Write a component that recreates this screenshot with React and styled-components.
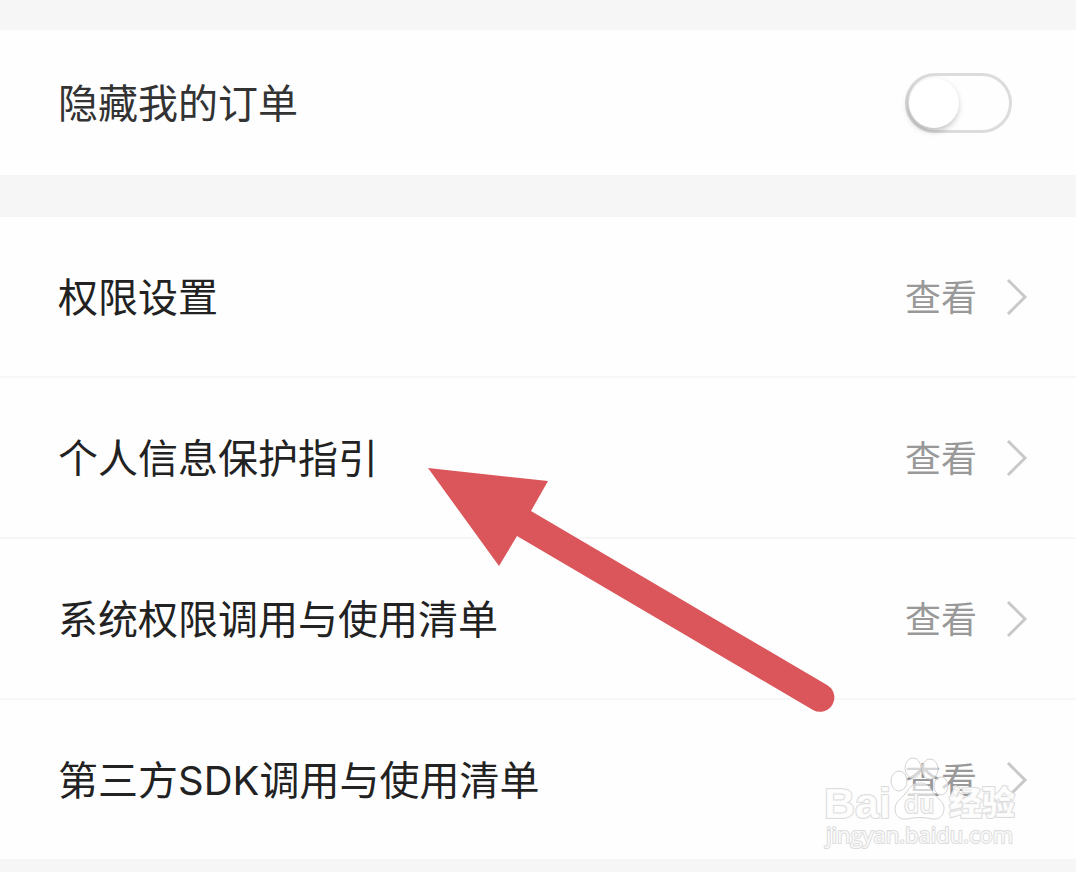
import styled, { createGlobalStyle } from 'styled-components';

const GlobalStyle = createGlobalStyle`
  * {
    box-sizing: border-box;
  }

  body {
    margin: 0;
    background: #f6f6f6;
    font-family: Inter, 'Noto Sans CJK SC', sans-serif;
  }
`;

const Page = styled.main`
  position: relative;
  display: flex;
  flex-direction: column;
  gap: 42px;
  padding: 30px 0 14px;
  overflow: hidden;
`;

const Group = styled.section`
  background: #fefefe;
`;

const List = styled.ul`
  margin: 0;
  padding: 0;
  list-style: none;
  background: #fefefe;
`;

const Item = styled.li`
  border-bottom: 2px solid #f6f6f6;

  &:last-child {
    border-bottom: 0;
  }
`;

const SwitchRow = styled.label`
  display: flex;
  align-items: center;
  justify-content: space-between;
  height: 145px;
  padding: 0 64px 0 58px;
`;

const LinkRow = styled.a`
  display: flex;
  align-items: center;
  height: 159px;
  padding: 0 48px 0 58px;
  color: inherit;
  text-decoration: none;
`;

const Label = styled.span`
  flex: 1;
  padding-top: 2px;
  color: ${(props) => props.$color || '#222'};
  font-size: 40px;
  line-height: 60px;
`;

const Value = styled.span`
  margin-right: 28px;
  padding-top: 2px;
  color: #999;
  font-size: 36px;
  line-height: 60px;
`;

const Switch = styled.input`
  appearance: none;
  display: flex;
  align-items: center;
  width: 107px;
  height: 60px;
  margin: 0;
  padding: 0 1px;
  border: 3px solid #dcdcdc;
  border-radius: 30px;
  background: #fefefe;
  cursor: pointer;

  &::before {
    content: '';
    width: 50px;
    height: 50px;
    border-radius: 50%;
    background: #fff;
    box-shadow: -1px 3px 6px rgba(0, 0, 0, 0.26);
  }

  &:checked {
    justify-content: flex-end;
    background: #4cd964;
  }
`;

const Chevron = styled.svg`
  width: 23px;
  height: 40px;
  fill: none;
  stroke: #c8c8c8;
  stroke-width: 3;
`;

const Arrow = styled.svg`
  position: absolute;
  top: 466px;
  left: 427px;
  width: 410px;
  height: 248px;
  fill: #db565b;
  pointer-events: none;
`;

const Watermark = styled.svg`
  position: absolute;
  right: 50px;
  bottom: 18px;
  width: 204px;
  height: 100px;
  fill: rgba(255, 255, 255, 0.6);
  stroke: #d4d4d4;
  stroke-width: 1;
  pointer-events: none;

  text {
    fill: rgba(255, 255, 255, 0.85);
    stroke: #dcdcdc;
    stroke-width: 2;
    stroke-linejoin: round;
    paint-order: stroke;
  }
`;

const links = ['权限设置', '个人信息保护指引', '系统权限调用与使用清单', '第三方SDK调用与使用清单'];

export default function App() {
  return (
    <Page>
      <GlobalStyle />

      <Group>
        <SwitchRow>
          <Label $color="#333">隐藏我的订单</Label>
          <Switch type="checkbox" role="switch" />
        </SwitchRow>
      </Group>

      <List>
        {links.map((label) => (
          <Item key={label}>
            <LinkRow href="#">
              <Label>{label}</Label>
              <Value>查看</Value>
              <Chevron viewBox="0 0 23 40" aria-hidden="true">
                <path d="M3 3 20 20 3 37" />
              </Chevron>
            </LinkRow>
          </Item>
        ))}
      </List>

      <Arrow viewBox="427 466 410 248" aria-hidden="true">
        <path d="M428 468 548 481 531 511 827 685A14 14 0 0 1 813 710L517 536 499 566Z" />
      </Arrow>

      <Watermark viewBox="822 754 204 100">
        <ellipse cx="899" cy="780" rx="8" ry="10" />
        <ellipse cx="913" cy="767" rx="8" ry="10" />
        <ellipse cx="930" cy="768" rx="8" ry="10" />
        <ellipse cx="941" cy="785" rx="7" ry="9" />
        <path d="M920 782c-8 0-11 6-15 11-4 5-10 8-10 15 0 7 5 11 12 10 9-2 17-2 25 0 8 1 12-4 12-11 0-6-6-9-10-14-4-6-6-11-14-11Z" />
        <text x="824" y="817" fontFamily="Liberation Sans" fontSize="43" fontWeight="700">
          Bai
        </text>
        <text x="904" y="812" fontFamily="DejaVu Sans" fontSize="24">
          du
        </text>
        <text x="949" y="814" fontFamily="Noto Sans CJK SC" fontSize="33" fontWeight="900">
          经验
        </text>
        <text x="826" y="842" fontFamily="Open Sans" fontSize="22" fontWeight="500">
          jingyan.baidu.com
        </text>
      </Watermark>
    </Page>
  );
}
